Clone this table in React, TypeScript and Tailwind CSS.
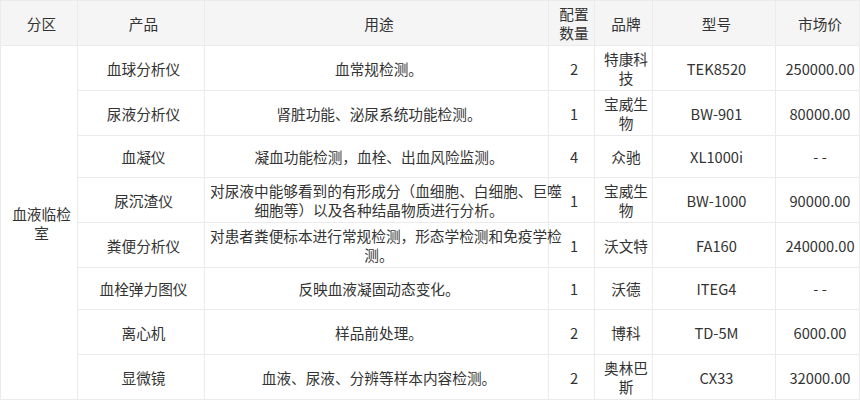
import React from 'react';

type Row = {
  product: string;
  usage: React.ReactNode;
  qty: string;
  brand: React.ReactNode;
  model: string;
  price: string;
  h: string;
};

const rows: Row[] = [
  { product: '血球分析仪', usage: '血常规检测。', qty: '2', brand: <>特康科<br />技</>, model: 'TEK8520', price: '250000.00', h: 'h-[45px]' },
  { product: '尿液分析仪', usage: '肾脏功能、泌尿系统功能检测。', qty: '1', brand: <>宝威生<br />物</>, model: 'BW-901', price: '80000.00', h: 'h-[45px]' },
  { product: '血凝仪', usage: '凝血功能检测，血栓、出血风险监测。', qty: '4', brand: '众驰', model: 'XL1000i', price: '- -', h: 'h-[42px]' },
  {
    product: '尿沉渣仪',
    usage: <>对尿液中能够看到的有形成分（血细胞、白细胞、巨噬<br />细胞等）以及各种结晶物质进行分析。</>,
    qty: '1',
    brand: <>宝威生<br />物</>,
    model: 'BW-1000',
    price: '90000.00',
    h: 'h-[45px]',
  },
  {
    product: '粪便分析仪',
    usage: <>对患者粪便标本进行常规检测，形态学检测和免疫学检<br />测。</>,
    qty: '1',
    brand: '沃文特',
    model: 'FA160',
    price: '240000.00',
    h: 'h-[45px]',
  },
  { product: '血栓弹力图仪', usage: '反映血液凝固动态变化。', qty: '1', brand: '沃德', model: 'ITEG4', price: '- -', h: 'h-[42px]' },
  { product: '离心机', usage: '样品前处理。', qty: '2', brand: '博科', model: 'TD-5M', price: '6000.00', h: 'h-[45px]' },
  { product: '显微镜', usage: '血液、尿液、分辨等样本内容检测。', qty: '2', brand: <>奥林巴<br />斯</>, model: 'CX33', price: '32000.00', h: 'h-[45px]' },
];

const cell = 'border border-[#ebebeb] pl-[5px] pr-0 py-0 text-center align-middle';

export default function App() {
  return (
    <div
      lang="zh-CN"
      className="w-[860px] h-[400px] bg-white text-[#333] text-[14.67px] leading-[19px]"
      style={{ fontFamily: '"Noto Sans CJK SC", "Noto Sans", sans-serif' }}
    >
      <table className="w-[859px] table-fixed border-collapse">
        <colgroup>
          <col className="w-[77px]" />
          <col className="w-[127px]" />
          <col className="w-[344px]" />
          <col className="w-[46px]" />
          <col className="w-[58px]" />
          <col className="w-[123px]" />
          <col className="w-[84px]" />
        </colgroup>
        <thead>
          <tr className="h-[45px] bg-[#f5f5f5]">
            <th className={`${cell} font-normal`}>分区</th>
            <th className={`${cell} font-normal`}>产品</th>
            <th className={`${cell} font-normal`}>用途</th>
            <th className={`${cell} font-normal`}>配置<br />数量</th>
            <th className={`${cell} font-normal`}>品牌</th>
            <th className={`${cell} font-normal`}>型号</th>
            <th className={`${cell} font-normal`}>市场价</th>
          </tr>
        </thead>
        <tbody>
          {rows.map((r, i) => (
            <tr key={r.product} className={r.h}>
              {i === 0 && (
                <td className={cell} rowSpan={rows.length}>
                  血液临检<br />室
                </td>
              )}
              <td className={cell}>{r.product}</td>
              <td className={`${cell} whitespace-nowrap`}>{r.usage}</td>
              <td className={cell}>{r.qty}</td>
              <td className={`${cell} whitespace-nowrap`}>{r.brand}</td>
              <td className={cell}>{r.model}</td>
              <td className={cell}>{r.price}</td>
            </tr>
          ))}
        </tbody>
      </table>
    </div>
  );
}
